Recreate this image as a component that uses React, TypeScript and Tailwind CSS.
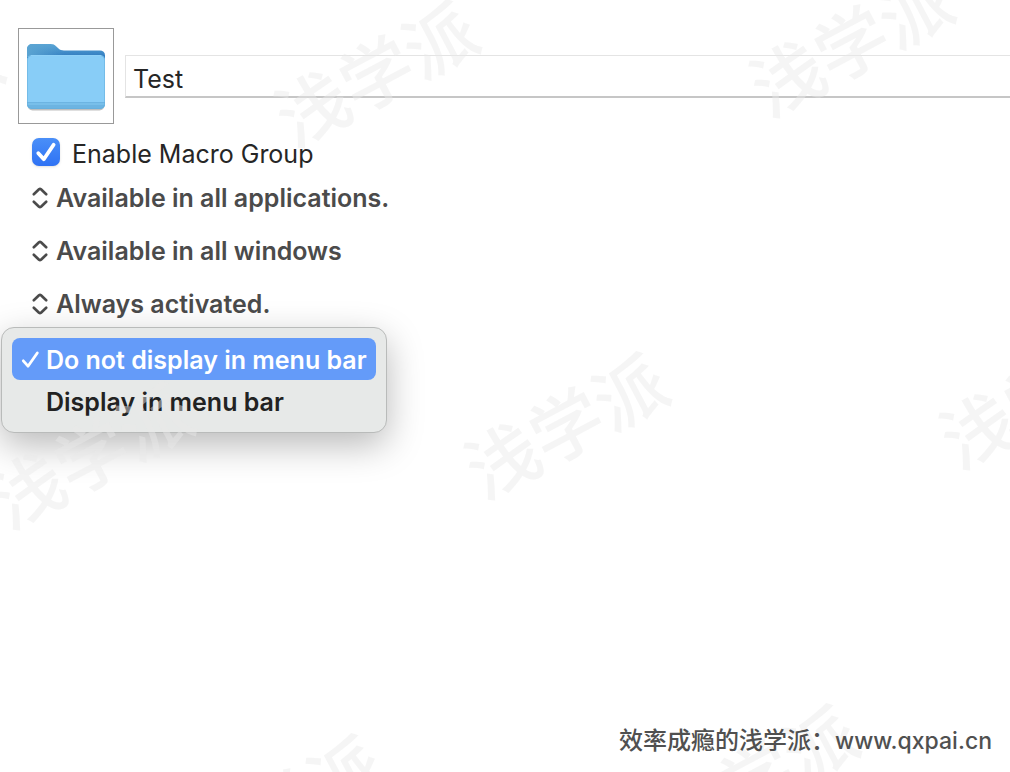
import { useState } from "react";

const watermarks = [
  "left-[-98px] top-[105px]",
  "left-[377px] top-[75px]",
  "left-[852px] top-[45px]",
  "left-[92px] top-[457px]",
  "left-[567px] top-[427px]",
  "left-[1042px] top-[397px]",
  "left-[282px] top-[809px]",
  "left-[757px] top-[779px]",
];

const conditions = [
  { label: "Applications", value: "Available in all applications." },
  { label: "Windows", value: "Available in all windows" },
  { label: "Activation", value: "Always activated." },
];

const menuItems = ["Do not display in menu bar", "Display in menu bar"];

function FolderIcon() {
  return (
    <svg viewBox="0 0 80 70" className="h-[70px] w-20" aria-hidden="true">
      <defs>
        <linearGradient id="folder-back" x1="0" y1="0" x2="0" y2="1">
          <stop offset="0" stopColor="#5aa5d6" />
          <stop offset="0.4" stopColor="#3580c2" />
          <stop offset="1" stopColor="#3580c2" />
        </linearGradient>
        <linearGradient id="folder-tab" x1="0" y1="0" x2="1" y2="0">
          <stop offset="0" stopColor="#5ba4d2" />
          <stop offset="1" stopColor="#5ba4d2" stopOpacity="0" />
        </linearGradient>
        <clipPath id="folder-clip">
          <rect x="1" y="12" width="78" height="54" rx="5" />
        </clipPath>
      </defs>
      <rect x="1.5" y="20" width="77" height="47.500" rx="5" fill="#000" opacity="0.25" />
      <path
        d="M1 6a5 5 0 0 1 5-5h18.500c2.500 0 4 .8 5.500 2.200l2.500 2.300C34 7 35.500 7.400 38 7.400h36a5 5 0 0 1 5 5V30H1z"
        fill="url(#folder-back)"
      />
      <path
        d="M1 6a5 5 0 0 1 5-5h18.500c2.500 0 4 .8 5.500 2.200l2.500 2.300C34 7 35.500 7.400 38 7.400V14H1z"
        fill="url(#folder-tab)"
      />
      <rect x="1" y="12" width="78" height="54" rx="5" fill="#88cdf7" />
      <g clipPath="url(#folder-clip)">
        <rect x="1" y="59" width="78" height="7" fill="#78bfea" />
        <rect x="1" y="62" width="78" height="4" fill="#6cb4e2" />
        <rect x="1" y="59" width="78" height="1" fill="#6cb4e2" />
      </g>
      <rect x="1.500" y="12.500" width="77" height="53" rx="4.500" fill="none" stroke="#5fabd9" strokeOpacity="0.5" />
      <path d="M5 12.500h70" stroke="#8fd1f8" strokeWidth="1" />
    </svg>
  );
}

function PopupArrows() {
  return (
    <svg
      viewBox="0 0 16 24"
      className="h-6 w-4 shrink-0"
      fill="none"
      stroke="#4b4b4b"
      strokeWidth="2.600"
      strokeLinecap="round"
      strokeLinejoin="round"
      aria-hidden="true"
    >
      <path d="M1.800 8.300 7 3.200q1-.8 2 0l5.200 5.100M1.800 15.700 7 20.800q1 .8 2 0l5.200-5.100" />
    </svg>
  );
}

export default function App() {
  const [name, setName] = useState("Test");
  const [enabled, setEnabled] = useState(true);
  const [display, setDisplay] = useState(0);

  return (
    <main className="relative flex min-h-screen flex-col overflow-hidden bg-white font-['Inter','Noto_Sans_CJK_SC',sans-serif] text-[#262626]">
      <header className="flex items-center gap-[11px] pt-7 pl-[18px]">
        <button
          type="button"
          aria-label="Group icon"
          className="flex size-24 shrink-0 items-center justify-center border border-[#999999] bg-white pt-1"
        >
          <FolderIcon />
        </button>
        <input
          aria-label="Group name"
          value={name}
          onChange={(e) => setName(e.target.value)}
          className="h-[43px] min-w-0 flex-1 border-t border-b-2 border-l border-t-[#e4e4e4] border-b-[#c6c6c6] border-l-[#e4e4e4] px-[7px] pt-[6px] text-[25px] leading-8 outline-none"
        />
      </header>

      <section className="flex flex-col items-start pl-8">
        <label className="mt-[14px] flex h-7 items-center gap-3 text-[25px] leading-8">
          <span className="grid size-7">
            <input
              type="checkbox"
              checked={enabled}
              onChange={(e) => setEnabled(e.target.checked)}
              className="peer col-start-1 row-start-1 size-7 appearance-none rounded-[7px] bg-[#e4e4e4] shadow-sm checked:bg-linear-to-b checked:from-[#4a8ff8] checked:to-[#2f72f4]"
            />
            <svg
              viewBox="0 0 28 28"
              className="pointer-events-none invisible col-start-1 row-start-1 size-7 peer-checked:visible"
              fill="none"
              stroke="white"
              strokeWidth="3.800"
              strokeLinecap="round"
              strokeLinejoin="round"
              aria-hidden="true"
            >
              <path d="M6.300 15.200 11.800 21.200 21.600 6.800" />
            </svg>
          </span>
          <span className="pt-1">Enable Macro Group</span>
        </label>

        <div className="mt-4 flex flex-col items-start gap-[21px]">
          {conditions.map((item) => (
            <label key={item.label} className="flex h-8 items-center gap-2">
              <PopupArrows />
              <select
                aria-label={item.label}
                className="appearance-none bg-transparent text-[25px] leading-8 font-semibold text-[#4b4b4b] outline-none"
              >
                <option>{item.value}</option>
              </select>
            </label>
          ))}
        </div>
      </section>

      <div className="relative mt-[7px] h-[106px]">
        <div
          role="menu"
          aria-label="Menu bar display"
          className="absolute top-0 left-px flex w-[386px] flex-col rounded-[13px] border border-[#b9bbba] bg-[#e7e9e8] px-[10px] pt-[10px] pb-[10px] shadow-[0_12px_36px_rgba(0,0,0,0.28)]"
        >
          {menuItems.map((item, i) => (
            <button
              key={item}
              type="button"
              role="menuitemradio"
              aria-checked={display === i}
              onClick={() => setDisplay(i)}
              className="flex h-[42px] items-center gap-[6px] rounded-lg pt-[2px] pl-2 text-left text-[25px] leading-8 font-semibold whitespace-nowrap text-[#222222] aria-checked:bg-[#649bf9] aria-checked:text-white"
            >
              <span className="flex w-5 shrink-0">
                {display === i && (
                  <svg
                    viewBox="0 0 20 20"
                    className="size-5"
                    fill="none"
                    stroke="currentColor"
                    strokeWidth="2.800"
                    strokeLinecap="round"
                    strokeLinejoin="round"
                    aria-hidden="true"
                  >
                    <path d="M3.300 10.800 8 16.200 17.300 3" />
                  </svg>
                )}
              </span>
              {item}
            </button>
          ))}
        </div>
      </div>

      <div aria-hidden="true" className="pointer-events-none absolute inset-0 overflow-hidden">
        {watermarks.map((place) => (
          <span
            key={place}
            className={`absolute -translate-1/2 -rotate-[28deg] text-[72px] leading-none font-medium whitespace-nowrap text-[#e8e8e8]/45 ${place}`}
          >
            浅学派
          </span>
        ))}
      </div>

      <footer className="relative mt-auto pr-[18px] pb-[15px] text-right text-[24px] leading-8 font-medium text-[#505050]">
        效率成瘾的浅学派：
        <a href="https://www.qxpai.cn" className="text-[23px]">
          www.qxpai.cn
        </a>
      </footer>
    </main>
  );
}
